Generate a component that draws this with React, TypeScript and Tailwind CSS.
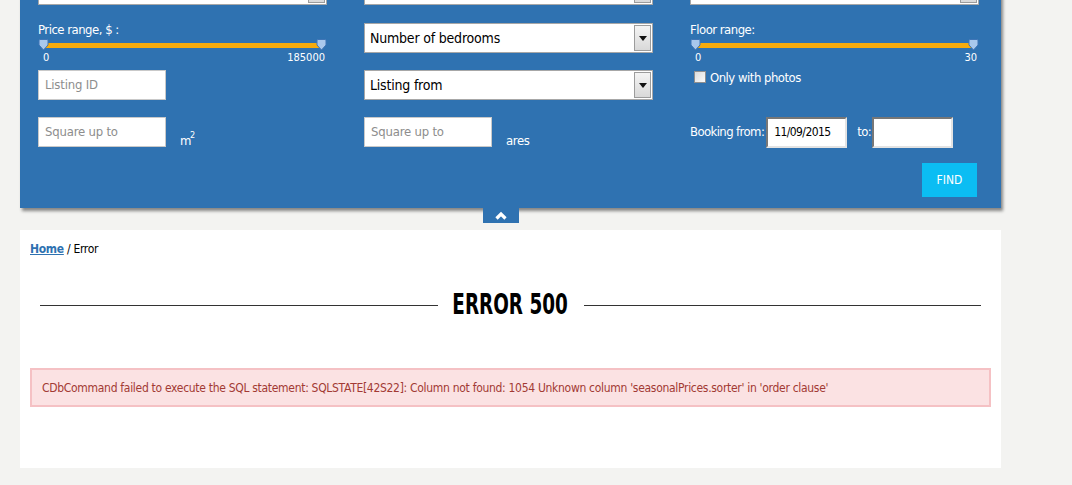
import React from "react";

const FONT = "font-['DejaVu_Sans_Condensed','Liberation_Sans',sans-serif]";

function SelectBox({ label }: { label: string }) {
  return (
    <div className="flex h-[30px] items-stretch border border-[#a7a7a7] bg-white">
      <span className="flex flex-1 items-center pl-[5px] text-[14px] tracking-[-0.2px] text-black">{label}</span>
      <div className="m-[1px] flex w-[17px] items-center justify-center border border-[#9c9c9c] bg-gradient-to-b from-[#f4f4f4] to-[#d9d9d9]">
        <svg width="8" height="5" viewBox="0 0 8 5">
          <path d="M0 0h8L4 5z" fill="#111" />
        </svg>
      </div>
    </div>
  );
}

function TextBox({ placeholder }: { placeholder: string }) {
  return (
    <div className="flex h-[30px] w-[128px] shrink-0 items-center border border-[#c9c9c9] bg-white pl-[6px] text-[13px] tracking-[-0.2px] text-[#8d8d8d]">
      {placeholder}
    </div>
  );
}

function Handle() {
  return (
    <svg width="11" height="12" viewBox="0 0 11 12">
      <path d="M1 1.5Q1 .5 2 .5h7q1 0 1 1V6L5.5 11 1 6z" fill="#a9c8ec" stroke="#3f75b6" strokeWidth="1" />
    </svg>
  );
}

function Slider({ label, max }: { label: string; max: string }) {
  return (
    <div className="-mt-[2px]">
      <div className="h-[17px] text-[13px] leading-[17px] tracking-[-0.5px] text-white">{label}</div>
      <div className="relative h-[13px]">
        <div className="absolute left-[4px] right-[5px] top-[5px] h-[5px] bg-[#f6ab0c]" />
        <div className="absolute left-0 top-[1px]">
          <Handle />
        </div>
        <div className="absolute right-0 top-[1px]">
          <Handle />
        </div>
      </div>
      <div className="flex justify-between pl-[5px] pr-[2px] text-[11px] leading-[13px] text-white">
        <span>0</span>
        <span>{max}</span>
      </div>
    </div>
  );
}

function DateBox({ value }: { value?: string }) {
  return (
    <div className="flex h-[31px] w-[81px] items-center border-2 border-t-[#777] border-l-[#777] border-b-[#e3e3e3] border-r-[#e3e3e3] bg-white pl-[6px] text-[12px] text-black">
      {value}
    </div>
  );
}

export default function App() {
  return (
    <div className={`min-h-[485px] w-[1072px] overflow-hidden bg-[#f3f3f1] ${FONT}`}>
      <div className="ml-[20px] w-[981px]">
        {/* search panel */}
        <div className="-mt-[25px] bg-[#2f72b1] pb-[11px] pl-[18px] pr-[22px] shadow-[2px_3px_3px_rgba(0,0,0,0.45)]">
          <div className="mb-[18px] grid grid-cols-[289px_289px_289px] gap-x-[37px]">
            <SelectBox label="" />
            <SelectBox label="" />
            <SelectBox label="" />
          </div>
          <div className="grid grid-cols-[289px_289px_289px] grid-rows-[30px_30px_30px] gap-x-[37px] gap-y-[17px]">
            <Slider label="Price range, $ :" max="185000" />
            <SelectBox label="Number of bedrooms" />
            <Slider label="Floor range:" max="30" />

            <TextBox placeholder="Listing ID" />
            <SelectBox label="Listing from" />
            <label className="flex items-start gap-[4px] pl-[4px] pt-[1px] text-[13px] tracking-[-0.5px] text-white">
              <span className="h-[12px] w-[12px] border border-[#8f8f8f] bg-gradient-to-br from-[#dcdcdc] to-[#fafafa]" />
              <span className="-mt-[1px] leading-[15px]">Only with photos</span>
            </label>

            <div className="flex items-end gap-[14px]">
              <TextBox placeholder="Square up to" />
              <span className="relative -mb-[1px] text-[13px] leading-[14px] text-white">
                m<span className="absolute -top-[6px] left-[10px] text-[9px]">2</span>
              </span>
            </div>
            <div className="flex items-end gap-[14px]">
              <TextBox placeholder="Square up to" />
              <span className="-mb-[1px] text-[13px] leading-[14px] tracking-[-0.4px] text-white">ares</span>
            </div>
            <div className="flex items-center text-[13px] tracking-[-0.6px] text-white">
              <span className="mr-[2px]">Booking from:</span>
              <DateBox value="11/09/2015" />
              <span className="ml-[10px] mr-[1px]">to:</span>
              <DateBox />
            </div>
          </div>
          <div className="mt-[16px] flex justify-end pr-[2px]">
            <button className="h-[34px] w-[55px] bg-[#0bbdf3] text-[12px] text-white">FIND</button>
          </div>
        </div>

        {/* collapse tab */}
        <div className="ml-[463px] flex h-[15px] w-[36px] items-center justify-center bg-[#2f72b1]">
          <svg width="12" height="9" viewBox="0 0 12 9">
            <path d="M1.5 7.5 6 3 10.5 7.5" fill="none" stroke="#fff" strokeWidth="3.2" />
          </svg>
        </div>

        {/* content */}
        <div className="mt-[7px] h-[238px] bg-white px-[10px] pt-[10px]">
          <div className="text-[12px] leading-[18px] tracking-[-0.3px] text-black">
            <a className="font-bold text-[#2f72b1] underline">Home</a> / Error
          </div>
          <div className="mt-[27px] flex items-center px-[10px]">
            <div className="h-px flex-1 bg-[#333]" />
            <div className="flex w-[146px] justify-center px-[16px]">
              <h1 className="shrink-0 scale-x-[0.73] whitespace-nowrap text-[28px] font-bold leading-[40px] text-black">
                ERROR 500
              </h1>
            </div>
            <div className="h-px flex-1 bg-[#333]" />
          </div>
          <div className="mt-[43px] flex h-[39px] items-center border-2 border-[#f5c1c4] bg-[#fbe2e3] px-[10px] text-[12px] tracking-[-0.3px] text-[#a23a34]">
            CDbCommand failed to execute the SQL statement: SQLSTATE[42S22]: Column not found: 1054 Unknown column
            'seasonalPrices.sorter' in 'order clause'
          </div>
        </div>
      </div>
    </div>
  );
}
